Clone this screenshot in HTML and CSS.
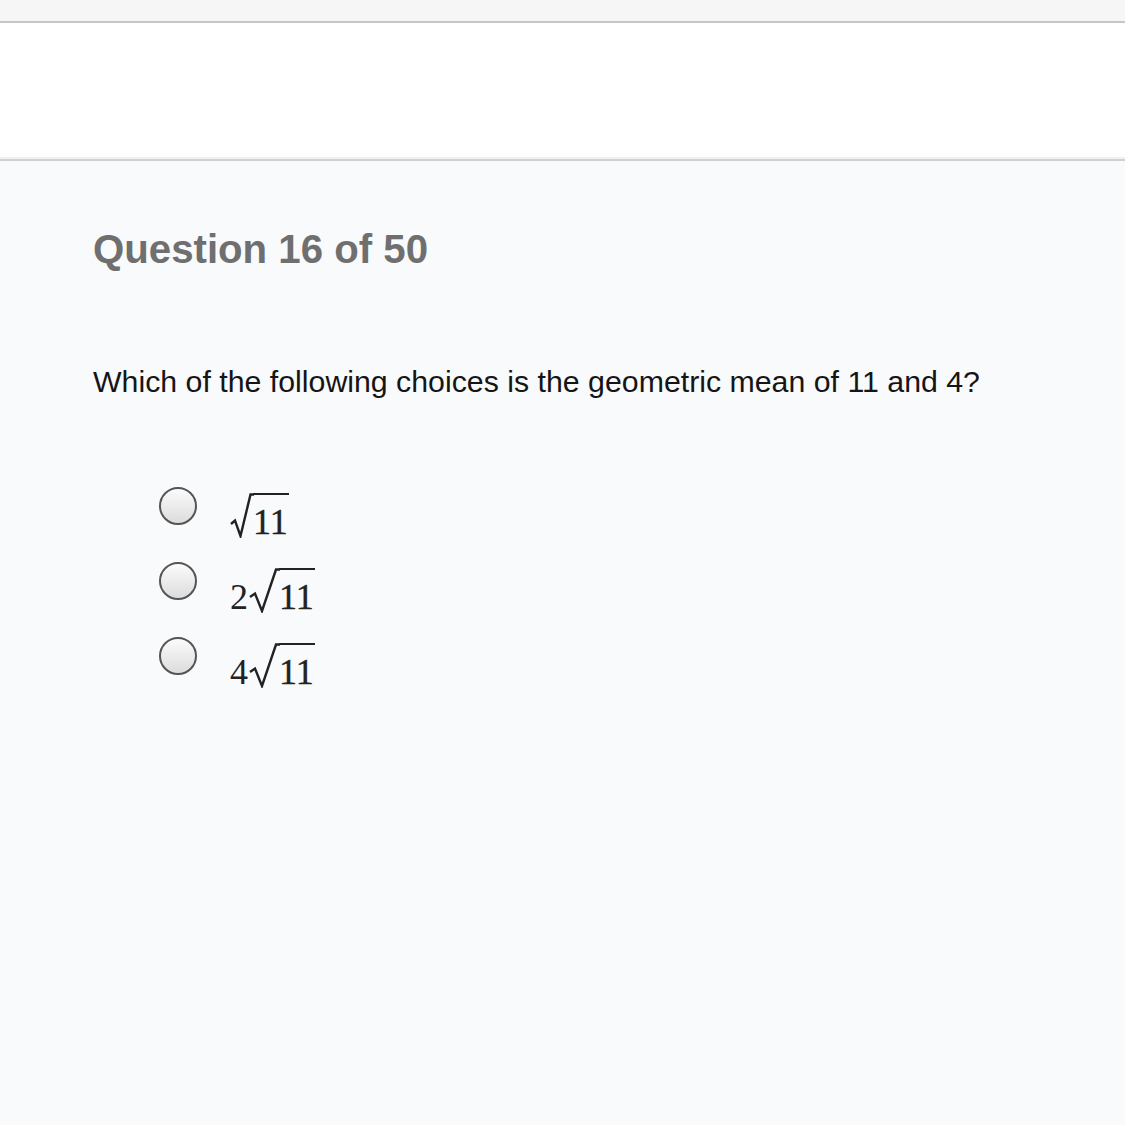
FILE: index.html
```html
<!DOCTYPE html>
<html lang="en">
<head>
<meta charset="utf-8">
<title>Question 16 of 50</title>
<link rel="stylesheet" href="styles.css">
</head>
<body>
<div class="topbar"></div>
<div class="header"></div>
<main class="content">
  <h1 class="q-title">Question 16 of 50</h1>
  <p class="q-text">Which of the following choices is the geometric mean of 11 and 4?</p>
  <ul class="options">
    <li class="option">
      <span class="radio"></span>
      <span class="math"><svg class="rad" width="24" height="45" viewBox="0 0 24 45"><path d="M1 31 L5 27.5 L10.5 43 L20.5 1.5 L24 1.5" fill="none" stroke="#222" stroke-width="2.4" stroke-linejoin="miter"/></svg><span class="radicand">11</span></span>
    </li>
    <li class="option">
      <span class="radio"></span>
      <span class="math">2<svg class="rad wide" width="31" height="45" viewBox="0 0 31 45"><path d="M1 29 L6 25.5 L13 43 L27 1.5 L31 1.5" fill="none" stroke="#222" stroke-width="2.4" stroke-linejoin="miter"/></svg><span class="radicand">11</span></span>
    </li>
    <li class="option">
      <span class="radio"></span>
      <span class="math">4<svg class="rad wide" width="31" height="45" viewBox="0 0 31 45"><path d="M1 29 L6 25.5 L13 43 L27 1.5 L31 1.5" fill="none" stroke="#222" stroke-width="2.4" stroke-linejoin="miter"/></svg><span class="radicand">11</span></span>
    </li>
  </ul>
</main>
</body>
</html>
```
FILE: styles.css
```css
html, body {
  margin: 0;
  padding: 0;
}
body {
  background: #f9fafb;
  font-family: "Liberation Sans", Arial, Helvetica, sans-serif;
  min-height: 1125px;
}
.topbar {
  height: 21px;
  background: #f6f6f6;
  border-bottom: 2px solid #c6c6c6;
}
.header {
  height: 136px;
  background: #ffffff;
  border-bottom: 2px solid #d0d0d0;
  box-shadow: inset 0 -2px 0 #f1f1f1;
}
.content {
  padding-left: 93px;
}
.q-title {
  margin: 69px 0 0 0;
  font-size: 40.2px;
  line-height: 40px;
  font-weight: bold;
  color: #6f6f6f;
}
.q-text {
  margin: 97px 0 0 0;
  font-size: 30.3px;
  line-height: 30px;
  color: #151515;
}
.options {
  list-style: none;
  margin: 71px 0 0 0;
  padding: 0 0 0 66px;
}
.option {
  height: 75px;
  display: flex;
  align-items: center;
  gap: 33px;
}
.radio {
  width: 34px;
  height: 34px;
  border-radius: 50%;
  border: 2.5px solid #555;
  background: linear-gradient(#fbfbfb, #dcdcdc);
  flex: none;
}
.math {
  font-family: "Liberation Serif", "Times New Roman", serif;
  font-size: 36px;
  line-height: 36px;
  color: #222;
  padding-top: 22px;
  white-space: nowrap;
}
.rad {
  vertical-align: -4px;
}
.rad.wide {
  margin-left: 1px;
}
.radicand {
  display: inline-block;
  border-top: 2px solid #222;
  padding-top: 9px;
  line-height: 36px;
  margin-left: -1px;
  padding-right: 1px;
  -webkit-text-stroke: 0.4px #222;
}
```
